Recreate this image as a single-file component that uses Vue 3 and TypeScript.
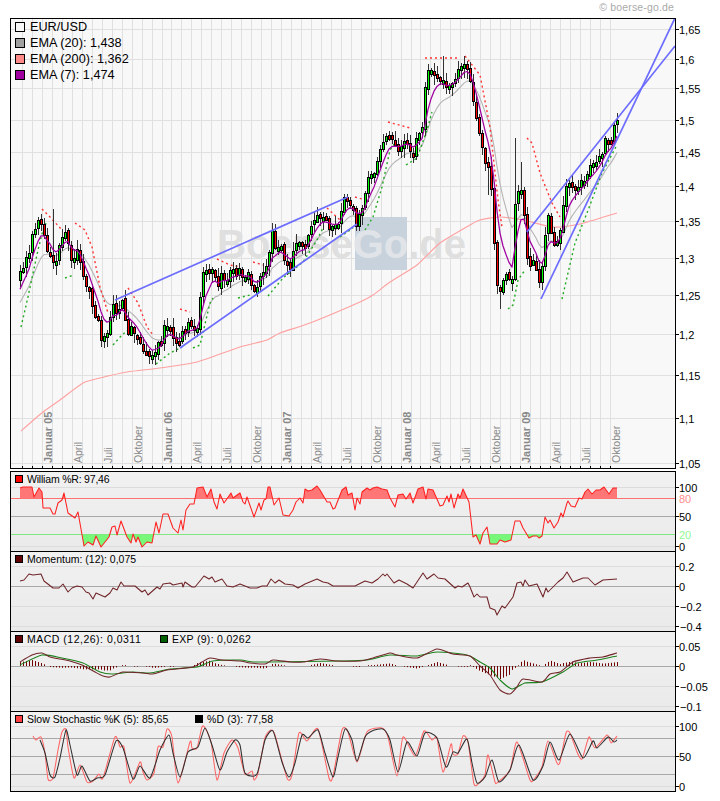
<template>
  <div class="chart">
    <div class="copyright">© boerse-go.de</div>

    <!-- Kurs-Chart -->
    <div class="panel main-panel">
      <svg class="plot" width="720" height="451" viewBox="0 18 720 451">
        <defs>
          <clipPath id="mainClip"><rect x="11" y="19" width="664" height="449" /></clipPath>
        </defs>
        <rect x="10.5" y="18.5" width="665" height="450" fill="#f8f8f8" />
        <line v-for="p in priceTicks" :key="'h' + p.y" x1="11" x2="675" :y1="p.y" :y2="p.y" class="grid" />
        <line v-for="x in monthLines" :key="'v' + x" :x1="x + 0.5" :x2="x + 0.5" y1="19" y2="468" class="grid" />

        <!-- Wasserzeichen -->
        <rect x="355" y="217" width="52" height="53" fill="#c8d2dc" />
        <text x="217" y="258" class="watermark">Boerse<tspan fill="#e0e4e8">Go</tspan>.de</text>

        <text
          v-for="m in monthLabels"
          :key="m.x"
          :transform="`rotate(-90 ${m.x + 10} 463)`"
          :x="m.x + 10"
          y="463"
          :class="m.bold ? 'month bold' : 'month'"
        >{{ m.text }}</text>

        <g clip-path="url(#mainClip)">
          <path :d="smooth(ema200)" class="line" stroke="#ffa0a0" />
          <polyline :points="emaPoints20" class="line" stroke="#b4b4b4" />
          <polyline
            v-for="(s, i) in sarRed"
            :key="'r' + i"
            :points="pts(s)"
            class="sar"
            stroke="#f33"
          />
          <polyline
            v-for="(s, i) in sarGreen"
            :key="'g' + i"
            :points="pts(s)"
            class="sar"
            stroke="#2a2"
          />
          <g v-for="c in candles" :key="c.x">
            <line :x1="c.x + 0.5" :x2="c.x + 0.5" :y1="c.hi" :y2="c.lo" stroke="#333" shape-rendering="crispEdges" />
            <rect
              :x="c.x - 0.5"
              :y="c.top"
              width="2"
              :height="c.h"
              :fill="c.up ? '#0f0' : '#f00'"
              stroke="#000"
              shape-rendering="crispEdges"
            />
          </g>
          <polyline :points="emaPoints7" class="line ema7" stroke="#a000a0" />
          <line
            v-for="(t, i) in trendLines"
            :key="'t' + i"
            :x1="t[0]"
            :y1="t[1]"
            :x2="t[2]"
            :y2="t[3]"
            stroke="#6c6cff"
            stroke-width="1.7"
          />
        </g>
        <rect x="10.5" y="18.5" width="665" height="450" class="frame" />
        <line
          v-for="x in monthLines"
          :key="'k' + x"
          :x1="x + 0.5"
          :x2="x + 0.5"
          y1="466"
          y2="468"
          stroke="#000"
        />
        <g v-for="p in priceTicks" :key="'l' + p.y">
          <line x1="675" x2="679" :y1="p.y" :y2="p.y" stroke="#000" />
          <text x="679" :y="p.y + 4" class="axis">{{ p.label }}</text>
        </g>
      </svg>
      <div class="legend legend-main">
        <div v-for="l in mainLegend" :key="l.text" class="legend-row">
          <span class="swatch swatch-big" :style="{ background: l.color }"></span>{{ l.text }}
        </div>
      </div>
    </div>

    <!-- Indikatoren -->
    <div v-for="(pn, i) in panels" :key="pn.id" class="panel sub-panel" :class="{ first: i === 0 }">
      <svg class="plot" width="720" height="81" :viewBox="`0 ${pn.top} 720 81`">
        <defs>
          <linearGradient :id="'bg' + pn.id" x1="0" y1="0" x2="0" y2="1">
            <stop offset="0" stop-color="#f1f1f1" />
            <stop offset="1" stop-color="#eaeaea" />
          </linearGradient>
          <clipPath :id="'over' + pn.id"><rect x="11" :y="pn.top" width="664" height="27.5" /></clipPath>
          <clipPath :id="'under' + pn.id"><rect x="11" y="534.5" width="664" height="16" /></clipPath>
        </defs>
        <rect x="10.5" :y="pn.top + 0.5" width="665" height="80" :fill="`url(#bg${pn.id})`" />
        <line
          v-for="g in pn.grid"
          :key="g.y"
          x1="11"
          x2="675"
          :y1="g.y"
          :y2="g.y"
          :stroke="g.color"
        />
        <template v-if="pn.id === 'will'">
          <polygon :points="pts(william) + ' 617,498 20,498'" fill="#ff7676" :clip-path="`url(#over${pn.id})`" />
          <polygon :points="pts(william) + ' 617,534.5 20,534.5'" fill="#78f878" :clip-path="`url(#under${pn.id})`" />
          <line x1="11" x2="675" y1="498.5" y2="498.5" stroke="#ff7070" />
          <line x1="11" x2="675" y1="534.5" y2="534.5" stroke="#80e880" />
        </template>
        <template v-if="pn.id === 'macd'">
          <line
            v-for="b in macdBars"
            :key="b.x"
            :x1="b.x"
            :x2="b.x"
            y1="666"
            :y2="b.y"
            stroke="#700000"
          />
        </template>
        <path
          v-for="(s, k) in pn.series"
          :key="k"
          :d="s.round ? smooth(s.data) : 'M' + pts(s.data)"
          class="line series"
          :stroke="s.color"
        />
        <rect x="10.5" :y="pn.top + 0.5" width="665" height="80" class="frame" />
        <g v-for="a in pn.axis" :key="a.label">
          <line v-if="a.tick" x1="675" x2="679" :y1="a.y" :y2="a.y" stroke="#000" />
          <text :x="a.x" :y="a.y + 4" class="axis" :fill="a.color">{{ a.label }}</text>
        </g>
      </svg>
      <div class="legend legend-sub">
        <span
          v-for="l in pn.legend"
          :key="l.text"
          class="legend-item"
          :style="{ width: l.width ? l.width + 'px' : 'auto', letterSpacing: l.spacing + 'px' }"
        >
          <span class="swatch" :style="{ background: l.color }"></span>{{ l.text }}
        </span>
      </div>
    </div>
  </div>
</template>

<script setup lang="ts">
type Flat = number[];

interface Candle {
  x: number;
  top: number;
  h: number;
  hi: number;
  lo: number;
  up: boolean;
}

// x,y Paare in Pixeln
const pts = (a: Flat): string => {
  const out: string[] = [];
  for (let i = 0; i < a.length; i += 2) out.push(a[i] + ',' + a[i + 1]);
  return out.join(' ');
};

// Catmull-Rom nach Bezier, etwas straffer damit die Spitzen nicht ueberschiessen
const smooth = (a: Flat): string => {
  const at = (i: number) => Math.max(0, Math.min(a.length - 2, i));
  let d = `M${a[0]},${a[1]}`;
  for (let i = 0; i < a.length - 2; i += 2) {
    const p0 = at(i - 2);
    const p3 = at(i + 4);
    const c1x = a[i] + (a[i + 2] - a[p0]) / 9;
    const c1y = a[i + 1] + (a[i + 3] - a[p0 + 1]) / 9;
    const c2x = a[i + 2] - (a[p3] - a[i]) / 9;
    const c2y = a[i + 3] - (a[p3 + 1] - a[i + 1]) / 9;
    d += ` C${c1x.toFixed(1)},${c1y.toFixed(1)} ${c2x.toFixed(1)},${c2y.toFixed(1)} ${a[i + 2]},${a[i + 3]}`;
  }
  return d;
};

const closePath: Flat = [
  20,275, 24,262, 28,258, 30,245, 32,232, 36,225, 40,218, 43,230, 47,252, 50,253, 54,267, 57,253, 60,240,
  65,233, 67,228, 70,262, 77,253, 80,263, 83,277, 87,290, 90,293, 93,313, 97,315, 100,338, 104,338, 108,327,
  113,302, 117,320, 121,293, 125,320, 128,330, 132,327, 137,337, 142,350, 147,357, 153,358, 156,343, 160,347,
  163,325, 168,325, 173,340, 178,345, 182,332, 187,322, 190,330, 197,325, 198,307, 202,287, 204,262, 208,275,
  213,263, 217,293, 222,273, 227,283, 230,272, 237,275, 240,270, 245,280, 248,275, 252,285, 255,293, 258,280,
  263,270, 268,262, 272,233, 275,250, 280,245, 283,258, 290,265, 295,247, 300,245, 305,248, 308,235, 313,220,
  317,215, 322,213, 325,222, 332,227, 337,225, 340,217, 343,200, 348,198, 352,208, 356,222, 362,210, 365,197,
  367,180, 373,175, 378,155, 383,142, 388,132, 393,143, 398,148, 405,140, 413,152, 417,137, 422,130, 425,90,
  428,72, 435,72, 440,78, 447,90, 452,82, 458,72, 465,62, 470,80, 474,110, 480,140, 485,163, 490,175, 493,227,
  497,287, 500,288, 505,272, 508,283, 513,278, 515,200, 520,182, 523,207, 525,230, 528,273, 533,262, 537,270,
  539,282, 543,263, 545,237, 547,215, 550,228, 555,250, 558,240, 562,215, 565,190, 568,178, 573,188, 578,183,
  585,177, 588,170, 595,165, 602,150, 605,140, 612,140, 615,122, 617,120,
];

const interp = (a: Flat, x: number): number => {
  for (let i = 0; i < a.length - 2; i += 2) {
    if (x <= a[i + 2]) return a[i + 1] + ((a[i + 3] - a[i + 1]) * (x - a[i])) / (a[i + 2] - a[i]);
  }
  return a[a.length - 1];
};

// fester Seed, damit das Bild stabil bleibt
let seed = 4711;
const rnd = (): number => {
  seed = (seed * 16807) % 2147483647;
  return seed / 2147483647;
};

const longWicks: Record<number, { hi?: number; lo?: number }> = {
  515: { hi: 138 },
  521: { hi: 162 },
  500: { lo: 309 },
  488: { lo: 195 },
  443: { hi: 56 },
  53: { hi: 209 },
};

const candles: Candle[] = [];
let prev = interp(closePath, 20) + 4;
for (let x = 20; x <= 617; x += 3) {
  const close = Math.round(interp(closePath, x) + (rnd() - 0.5) * 8);
  const open = Math.round(prev + (rnd() - 0.5) * 4);
  const top = Math.min(open, close);
  const h = Math.max(Math.abs(open - close), 4);
  const extra = longWicks[x] ?? {};
  candles.push({
    x,
    top: top + 0.5,
    h,
    hi: extra.hi ?? Math.round(top - 1 - rnd() * 8),
    lo: extra.lo ?? Math.round(top + h + 1 + rnd() * 9),
    up: close <= open,
  });
  prev = close;
}

const ema = (period: number, start: number): Flat => {
  const k = 2 / (period + 1);
  const out: Flat = [];
  let v = start;
  for (let x = 20; x <= 617; x += 3) {
    v = v + (interp(closePath, x) - v) * k;
    out.push(x, Math.round(v * 10) / 10);
  }
  return out;
};
const emaPoints7 = pts(ema(6, 295));
const emaPoints20 = pts(ema(13, 307));

const ema200: Flat = [
  21,431, 43,412, 60,400, 83,383, 100,378, 127,372, 160,368, 197,362, 240,347, 267,340, 280,333, 310,323,
  360,302, 373,295, 390,282, 417,265, 440,243, 470,225, 480,220, 500,217, 523,220, 553,227, 580,224, 617,213,
];

const sarRed: Flat[] = [
  [42,209, 50,217, 62,230],
  [75,223, 85,230, 92,247, 100,287, 108,313],
  [128,288, 138,303, 147,327, 153,335],
  [180,309, 190,312],
  [217,259, 230,265, 240,267],
  [253,262, 263,265],
  [327,208, 340,220],
  [355,197, 362,199],
  [388,122, 410,128],
  [425,58, 458,58],
  [465,56, 480,75, 490,127, 498,200, 502,227],
  [527,138, 532,143, 540,173, 552,203, 560,217],
];

const sarGreen: Flat[] = [
  [21,327, 28,297, 38,250, 43,230, 47,221],
  [65,278, 74,275],
  [113,345, 122,335, 128,330],
  [156,364, 170,353, 182,347],
  [193,348, 200,345, 210,303, 213,298],
  [238,298, 250,295],
  [268,296, 283,278, 303,262, 317,240, 323,228],
  [340,237, 353,228],
  [365,230, 373,217, 382,187, 390,150, 395,143],
  [406,165, 417,158, 427,130, 432,112],
  [508,309, 513,305, 518,280, 525,270],
  [562,299, 568,273, 575,243, 587,213, 602,173, 617,145],
];

const trendLines: Flat[] = [
  [115, 300, 348, 197],
  [180, 348, 357, 224],
  [527, 232, 675, 46],
  [541, 299, 675, 18],
];

const priceTicks = [
  { label: '1,65', y: 29.5 },
  { label: '1,6', y: 59.5 },
  { label: '1,55', y: 88.5 },
  { label: '1,5', y: 120.5 },
  { label: '1,45', y: 152.5 },
  { label: '1,4', y: 186.5 },
  { label: '1,35', y: 221.5 },
  { label: '1,3', y: 258.5 },
  { label: '1,25', y: 295.5 },
  { label: '1,2', y: 334.5 },
  { label: '1,15', y: 375.5 },
  { label: '1,1', y: 418.5 },
  { label: '1,05', y: 463.5 },
];

// Monatsraster, Januar 05 = 0
const monthX = (m: number): number => Math.round(42 + 9.96 * m);
const monthLines: number[] = [];
for (let m = -2; m <= 57; m++) monthLines.push(monthX(m));

const monthNames = ['Januar', 'April', 'Juli', 'Oktober'];
const monthLabels: { x: number; text: string; bold: boolean }[] = [];
for (let m = 0; m <= 57; m += 3) {
  const q = (m / 3) % 4;
  const year = String(5 + Math.floor(m / 12)).padStart(2, '0');
  monthLabels.push({
    x: monthX(m),
    text: q === 0 ? `Januar ${year}` : monthNames[q],
    bold: q === 0,
  });
}

const mainLegend = [
  { text: 'EUR/USD', color: '#f8f8f8' },
  { text: 'EMA (20): 1,438', color: '#a0a0a0' },
  { text: 'EMA (200): 1,362', color: '#ff8888' },
  { text: 'EMA (7): 1,474', color: '#a000a0' },
];

const william: Flat = [
  20,488, 23,487, 32,487, 34,497, 39,488, 42,492, 43,508, 50,508, 53,514, 55,514, 58,503, 62,500, 64,493, 68,513,
  75,518, 78,512, 84,546, 88,542, 93,545, 96,536, 101,547, 109,537, 112,527, 115,526, 117,535, 121,521, 127,537,
  131,543, 133,534, 136,542, 138,537, 142,547, 147,542, 152,543, 156,522, 159,533, 163,514, 168,514, 173,528,
  178,533, 181,520, 183,530, 186,510, 190,504, 194,504, 197,488, 203,487, 207,497, 211,489, 214,502, 217,509,
  220,494, 224,503, 231,493, 233,498, 240,493, 243,502, 245,504, 247,497, 254,517, 259,503, 261,510, 264,500,
  266,499, 268,487, 270,487, 274,505, 279,498, 283,515, 289,516, 293,510, 296,502, 300,498, 303,503, 305,489,
  308,491, 312,490, 317,486, 320,490, 327,502, 330,502, 333,509, 335,508, 342,490, 346,487, 348,495, 352,493,
  355,510, 357,498, 360,504, 362,492, 367,488, 370,490, 373,488, 377,487, 382,489, 387,490, 390,498, 395,507,
  398,495, 403,494, 406,499, 410,493, 413,503, 418,489, 423,487, 426,499, 428,489, 433,490, 440,506, 443,505,
  447,496, 449,502, 451,494, 454,508, 458,494, 460,498, 463,489, 469,502, 473,537, 476,535, 480,544, 483,533,
  487,527, 490,544, 497,544, 500,540, 505,542, 511,540, 515,521, 520,521, 523,528, 529,538, 533,536, 537,536,
  539,538, 542,536, 545,517, 548,523, 550,520, 554,528, 558,522, 561,513, 563,517, 567,503, 568,501, 571,506,
  575,507, 579,498, 582,499, 585,492, 588,489, 592,494, 596,490, 600,490, 604,487, 609,494, 613,488, 617,488,
];

const momentum: Flat = [
  20,581, 24,580, 29,574, 33,575, 41,574, 44,581, 53,588, 59,588, 63,584, 68,592, 72,588, 77,586, 82,587, 86,592,
  89,593, 93,599, 96,593, 105,597, 110,593, 113,588, 117,590, 121,582, 124,586, 135,586, 142,592, 145,590, 148,595,
  157,587, 160,589, 163,584, 170,583, 173,585, 182,583, 183,587, 185,582, 192,587, 195,587, 204,576, 209,579,
  212,577, 215,582, 222,579, 227,586, 233,587, 240,584, 250,588, 257,588, 262,586, 267,586, 271,579, 275,583,
  279,580, 285,584, 293,585, 298,588, 305,584, 317,579, 323,582, 328,583, 333,586, 355,586, 365,581, 372,583,
  378,579, 383,574, 385,576, 387,574, 394,583, 399,580, 407,584, 413,588, 423,573, 427,579, 434,574, 438,578,
  445,579, 455,588, 458,586, 462,587, 468,583, 470,587, 474,597, 477,594, 480,597, 487,597, 490,608, 495,610,
  497,615, 502,606, 505,608, 513,597, 517,583, 521,582, 523,586, 525,580, 529,586, 537,584, 543,597, 546,588,
  548,592, 558,582, 563,578, 567,572, 573,582, 583,578, 588,578, 595,585, 603,580, 617,579,
];

const macd: Flat = [
  20,662, 32,655, 42,653, 50,657, 60,659, 70,661, 82,665, 95,672, 103,676, 110,677, 123,672, 143,673, 153,674,
  167,670, 193,667, 202,662, 210,658, 222,660, 240,661, 250,663, 265,664, 273,660, 290,662, 303,662, 320,659,
  337,661, 360,661, 373,658, 390,653, 397,655, 417,658, 437,649, 453,654, 470,656, 480,666, 490,675, 500,690,
  510,694, 517,687, 523,679, 542,682, 550,674, 560,672, 573,662, 590,658, 603,657, 617,653,
];

const exp: Flat = [
  20,665, 42,655, 62,658, 83,663, 100,672, 112,674, 133,672, 150,673, 170,669, 197,667, 213,661, 240,660, 253,662,
  270,662, 340,661, 367,660, 390,655, 417,656, 437,652, 467,655, 480,662, 490,668, 500,680, 512,689, 525,683,
  542,682, 563,672, 577,663, 597,660, 617,656,
];

const macdBars: { x: number; y: number }[] = [];
for (let x = 20; x <= 617; x += 3) {
  const d = (interp(exp, x) - interp(macd, x)) * 1.3;
  if (Math.abs(d) >= 0.6) macdBars.push({ x: x + 0.5, y: 666 - d });
}

const stochK: Flat = [
  33,736, 36,740, 41,737, 45,753, 48,779, 53,778, 58,750, 62,732, 66,729, 68,747, 74,778, 80,765, 87,782, 93,781,
  99,774, 103,778, 115,737, 120,747, 124,747, 130,783, 140,762, 143,772, 147,780, 154,773, 158,747, 163,747,
  167,729, 172,737, 178,783, 190,742, 192,748, 197,748, 202,727, 205,728, 211,742, 217,780, 224,753, 232,740,
  238,748, 245,774, 252,771, 254,780, 258,773, 265,738, 271,730, 275,735, 287,778, 292,775, 299,733, 307,741,
  318,729, 329,778, 333,776, 342,730, 348,732, 357,762, 367,732, 382,728, 388,737, 397,776, 403,737, 415,756,
  424,731, 432,740, 437,738, 443,772, 451,744, 453,754, 458,754, 463,736, 468,742, 474,784, 480,782, 485,775,
  488,755, 495,782, 498,782, 510,770, 517,742, 530,780, 535,778, 542,767, 548,741, 557,763, 560,762, 566,733,
  570,733, 577,752, 582,759, 589,737, 595,748, 607,735, 611,743, 617,736,
];

const stochD: Flat = [
  40,740, 45,753, 50,775, 55,777, 60,758, 66,730, 70,745, 77,775, 82,766, 90,781, 97,778, 105,775, 116,741,
  123,748, 133,779, 140,766, 150,778, 160,750, 169,735, 173,753, 180,777, 188,752, 198,747, 205,728, 212,745,
  220,770, 227,752, 235,740, 240,745, 245,773, 257,774, 265,740, 273,731, 282,762, 289,777, 295,763, 302,735,
  308,738, 318,730, 325,753, 333,777, 338,757, 345,729, 352,740, 357,761, 365,737, 372,731, 383,729, 390,740,
  398,772, 407,742, 417,756, 425,733, 437,738, 446,767, 453,752, 458,753, 467,739, 472,763, 477,783, 485,777,
  492,760, 499,782, 510,770, 519,745, 533,780, 543,766, 550,742, 559,760, 570,734, 583,758, 593,741, 597,748,
  608,737, 614,742, 617,740,
];

const LIGHT = '#dcdcdc';
const MID = '#a8a8a8';

const tick = (label: string, y: number, color = '#000', hasTick = true) => ({
  label,
  y,
  color,
  tick: hasTick,
  x: label.startsWith('−') ? 680 : 679,
});

const panels = [
  {
    id: 'will',
    top: 471,
    grid: [
      { y: 487.5, color: LIGHT },
      { y: 516.5, color: MID },
      { y: 546.5, color: LIGHT },
    ],
    series: [{ data: william, color: '#ff2020', round: false }],
    axis: [
      tick('100', 487.5),
      tick('80', 498.5, '#ff8c8c', false),
      tick('50', 516.5),
      tick('20', 534.5, '#90f890', false),
      tick('0', 546.5),
    ],
    legend: [{ text: 'William %R: 97,46', color: '#f00', width: 0, spacing: -0.2 }],
  },
  {
    id: 'mom',
    top: 551,
    grid: [
      { y: 566.5, color: LIGHT },
      { y: 586.5, color: MID },
      { y: 606.5, color: LIGHT },
      { y: 626.5, color: LIGHT },
    ],
    series: [{ data: momentum, color: '#702428', round: false }],
    axis: [tick('0.2', 566.5), tick('0', 586.5), tick('−0.2', 606.5), tick('−0.4', 626.5)],
    legend: [{ text: 'Momentum: (12): 0,075', color: '#600000', width: 0, spacing: 0 }],
  },
  {
    id: 'macd',
    top: 631,
    grid: [
      { y: 646.5, color: LIGHT },
      { y: 666.5, color: MID },
      { y: 686.5, color: LIGHT },
      { y: 706.5, color: LIGHT },
    ],
    series: [
      { data: exp, color: '#1c801c', round: true },
      { data: macd, color: '#702428', round: true },
    ],
    axis: [tick('0.05', 646.5), tick('0', 666.5), tick('−0.05', 686.5), tick('−0.1', 706.5)],
    legend: [
      { text: 'MACD (12,26): 0,0311', color: '#600000', width: 145, spacing: 0.5 },
      { text: 'EXP (9): 0,0262', color: '#006000', width: 0, spacing: 0.3 },
    ],
  },
  {
    id: 'stoch',
    top: 711,
    grid: [
      { y: 726.5, color: LIGHT },
      { y: 738.5, color: MID },
      { y: 756.5, color: MID },
      { y: 774.5, color: MID },
      { y: 786.5, color: LIGHT },
    ],
    series: [
      { data: stochK, color: '#ff6464', round: true },
      { data: stochD, color: '#303030', round: true },
    ],
    axis: [tick('100', 726.5), tick('50', 756.5), tick('0', 786.5)],
    legend: [
      { text: 'Slow Stochastic %K (5): 85,65', color: '#ff4040', width: 180, spacing: 0 },
      { text: '%D (3): 77,58', color: '#000', width: 0, spacing: 0.1 },
    ],
  },
];
</script>

<style scoped>
.chart {
  width: 720px;
  height: 801px;
  background: #fff;
  font-family: "Liberation Sans", Arial, sans-serif;
  overflow: hidden;
}

.copyright {
  height: 18px;
  line-height: 14px;
  padding-right: 46px;
  text-align: right;
  font-size: 10.5px;
  letter-spacing: 0.15px;
  color: #aaa;
}

.panel {
  position: relative;
  width: 720px;
}

.sub-panel {
  margin-top: -1px;
  height: 81px;
}

.sub-panel.first {
  margin-top: 2px;
}

.main-panel {
  height: 451px;
}

.plot {
  display: block;
  overflow: visible;
}

.grid {
  stroke: #e0e0e0;
  stroke-width: 1;
}

.frame {
  fill: none;
  stroke: #000;
  stroke-width: 1;
}

.line {
  fill: none;
  stroke-width: 1.1;
  stroke-linejoin: round;
}

.line.series {
  stroke-width: 1.05;
}

.line.ema7 {
  stroke-width: 1.25;
}

.sar {
  fill: none;
  stroke-width: 1.4;
  stroke-dasharray: 2 3;
}

.watermark {
  font-size: 40px;
  font-weight: 700;
  fill: #dfdfdf;
}

.month {
  font-size: 10.5px;
  fill: #888;
}

.month.bold {
  font-size: 11px;
  font-weight: 700;
}

.axis {
  font-size: 11px;
}

.legend {
  position: absolute;
  left: 15px;
  color: #000;
}

.legend-main {
  top: 1px;
  font-size: 12.7px;
}

.legend-row {
  display: flex;
  align-items: center;
  height: 16px;
}

.legend-sub {
  top: 1px;
  display: flex;
  font-size: 10.5px;
  line-height: 14px;
}

.legend-item {
  display: flex;
  align-items: center;
  height: 14px;
  white-space: nowrap;
}

.swatch {
  display: inline-block;
  box-sizing: border-box;
  width: 8px;
  height: 8px;
  margin-right: 4px;
  border: 1px solid #000;
}

.swatch-big {
  width: 10px;
  height: 10px;
  margin-right: 5px;
}
</style>
